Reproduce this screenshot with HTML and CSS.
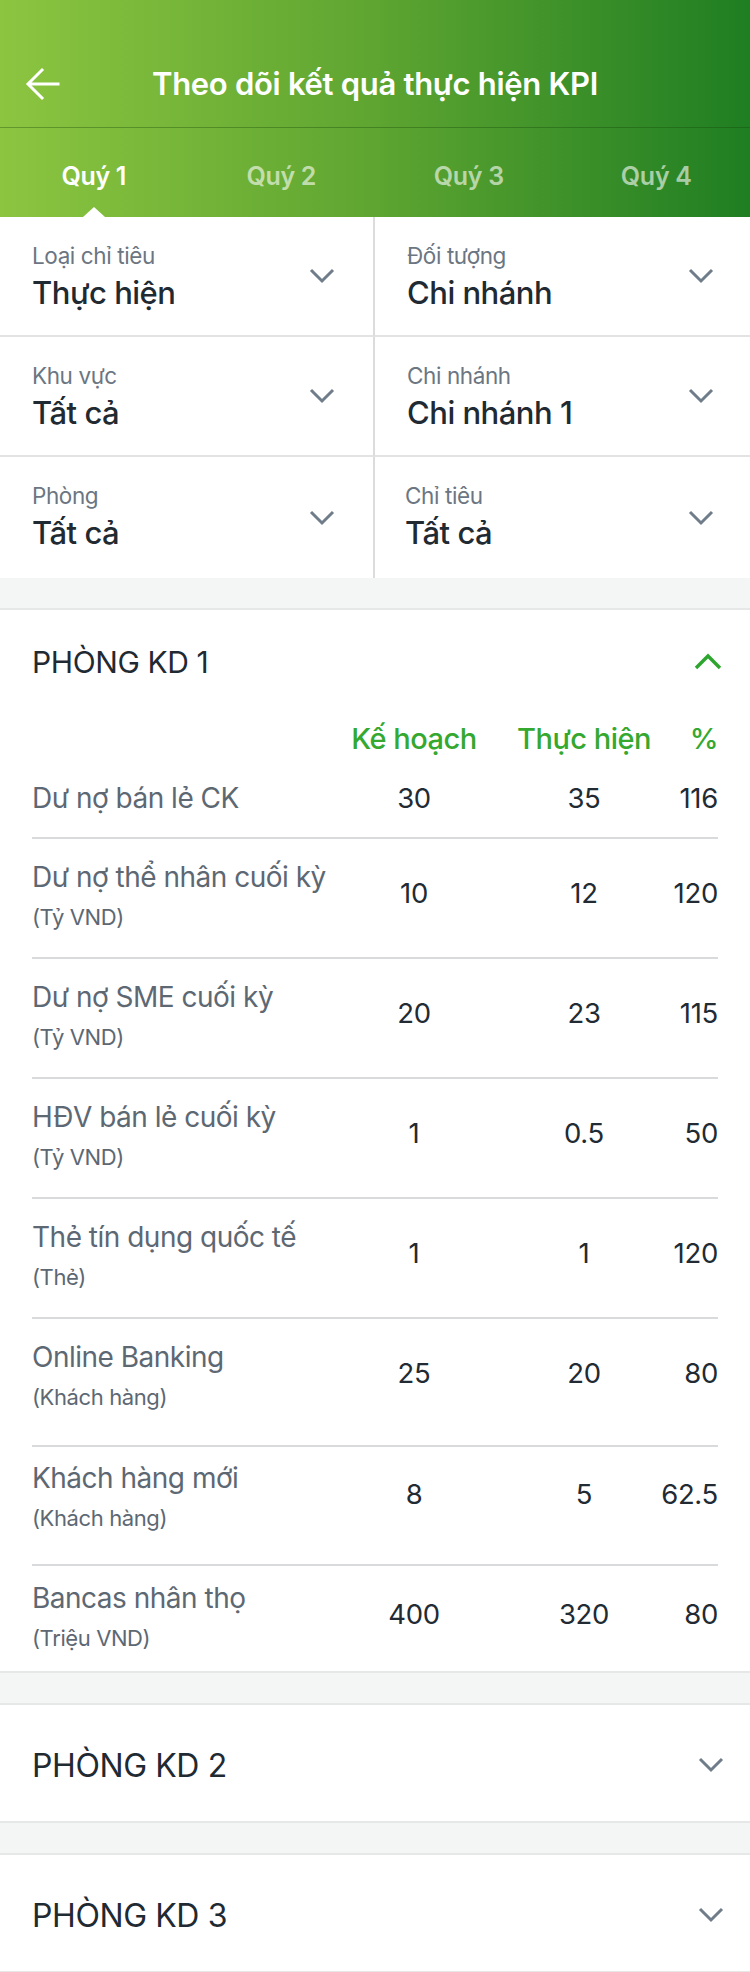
FILE: index.html
```html
<!DOCTYPE html>
<html lang="vi">
<head>
<meta charset="utf-8">
<title>Theo dõi kết quả thực hiện KPI</title>
<link rel="stylesheet" href="styles.css">
</head>
<body>
<div class="app">
  <header class="header">
    <div class="topbar">
      <div class="back">
        <svg width="36" height="36" viewBox="0 0 36 36" fill="none" stroke="#fff" stroke-width="3" stroke-linecap="square"><path d="M4 18H33M17 4L3 18L17 32"/></svg>
      </div>
      <h1 class="title">Theo dõi kết quả thực hiện KPI</h1>
      <div class="spacer"></div>
    </div>
    <nav class="tabs">
      <div class="tab tab--active">Quý 1</div>
      <div class="tab">Quý 2</div>
      <div class="tab">Quý 3</div>
      <div class="tab">Quý 4</div>
    </nav>
  </header>

  <section class="filters">
    <div class="filter filter--left">
      <div class="filter__text"><div class="filter__label">Loại chỉ tiêu</div><div class="filter__value">Thực hiện</div></div>
      <svg class="chev" width="26" height="18" viewBox="0 0 26 18"><path d="M2 3L13 14L24 3" fill="none" stroke="#6f7c89" stroke-width="3"/></svg>
    </div>
    <div class="filter">
      <div class="filter__text"><div class="filter__label">Đối tượng</div><div class="filter__value">Chi nhánh</div></div>
      <svg class="chev" width="26" height="18" viewBox="0 0 26 18"><path d="M2 3L13 14L24 3" fill="none" stroke="#6f7c89" stroke-width="3"/></svg>
    </div>
    <div class="filter filter--left">
      <div class="filter__text"><div class="filter__label">Khu vực</div><div class="filter__value">Tất cả</div></div>
      <svg class="chev" width="26" height="18" viewBox="0 0 26 18"><path d="M2 3L13 14L24 3" fill="none" stroke="#6f7c89" stroke-width="3"/></svg>
    </div>
    <div class="filter">
      <div class="filter__text"><div class="filter__label">Chi nhánh</div><div class="filter__value">Chi nhánh 1</div></div>
      <svg class="chev" width="26" height="18" viewBox="0 0 26 18"><path d="M2 3L13 14L24 3" fill="none" stroke="#6f7c89" stroke-width="3"/></svg>
    </div>
    <div class="filter filter--left filter--last">
      <div class="filter__text"><div class="filter__label">Phòng</div><div class="filter__value">Tất cả</div></div>
      <svg class="chev" width="26" height="18" viewBox="0 0 26 18"><path d="M2 3L13 14L24 3" fill="none" stroke="#6f7c89" stroke-width="3"/></svg>
    </div>
    <div class="filter filter--last">
      <div class="filter__text filter__text--tight"><div class="filter__label">Chỉ tiêu</div><div class="filter__value">Tất cả</div></div>
      <svg class="chev" width="26" height="18" viewBox="0 0 26 18"><path d="M2 3L13 14L24 3" fill="none" stroke="#6f7c89" stroke-width="3"/></svg>
    </div>
  </section>

  <div class="gap"></div>

  <section class="card">
    <div class="card__head">
      <span class="card__title">PHÒNG KD 1</span>
      <svg class="chev chev--up" width="28" height="18" viewBox="0 0 28 18"><path d="M2 15L14 3L26 15" fill="none" stroke="#2ea52e" stroke-width="3.4"/></svg>
    </div>
    <div class="table">
      <div class="thead">
        <span></span>
        <span class="th th--center">Kế hoạch</span>
        <span class="th th--center">Thực hiện</span>
        <span class="th th--right">%</span>
      </div>
      <div class="row row--single">
        <div class="row__name">Dư nợ bán lẻ CK</div>
        <div class="num num--center">30</div>
        <div class="num num--center">35</div>
        <div class="num num--right">116</div>
      </div>
      <div class="row">
        <div class="row__name">Dư nợ thể nhân cuối kỳ<span class="row__unit">(Tỷ VND)</span></div>
        <div class="num num--center">10</div>
        <div class="num num--center">12</div>
        <div class="num num--right">120</div>
      </div>
      <div class="row">
        <div class="row__name">Dư nợ SME cuối kỳ<span class="row__unit">(Tỷ VND)</span></div>
        <div class="num num--center">20</div>
        <div class="num num--center">23</div>
        <div class="num num--right">115</div>
      </div>
      <div class="row">
        <div class="row__name">HĐV bán lẻ cuối kỳ<span class="row__unit">(Tỷ VND)</span></div>
        <div class="num num--center">1</div>
        <div class="num num--center">0.5</div>
        <div class="num num--right">50</div>
      </div>
      <div class="row">
        <div class="row__name">Thẻ tín dụng quốc tế<span class="row__unit">(Thẻ)</span></div>
        <div class="num num--center">1</div>
        <div class="num num--center">1</div>
        <div class="num num--right">120</div>
      </div>
      <div class="row row--tall">
        <div class="row__name">Online Banking<span class="row__unit">(Khách hàng)</span></div>
        <div class="num num--center">25</div>
        <div class="num num--center">20</div>
        <div class="num num--right">80</div>
      </div>
      <div class="row row--up">
        <div class="row__name">Khách hàng mới<span class="row__unit">(Khách hàng)</span></div>
        <div class="num num--center">8</div>
        <div class="num num--center">5</div>
        <div class="num num--right">62.5</div>
      </div>
      <div class="row row--up row--last">
        <div class="row__name">Bancas nhân thọ<span class="row__unit">(Triệu VND)</span></div>
        <div class="num num--center">400</div>
        <div class="num num--center">320</div>
        <div class="num num--right">80</div>
      </div>
    </div>
  </section>

  <div class="gap"></div>

  <section class="card card--collapsed">
    <span class="card__title card__title--big">PHÒNG KD 2</span>
    <svg class="chev" width="26" height="18" viewBox="0 0 26 18"><path d="M2 3L13 14L24 3" fill="none" stroke="#6f7c89" stroke-width="3"/></svg>
  </section>

  <div class="gap"></div>

  <section class="card card--collapsed">
    <span class="card__title card__title--big">PHÒNG KD 3</span>
    <svg class="chev" width="26" height="18" viewBox="0 0 26 18"><path d="M2 3L13 14L24 3" fill="none" stroke="#6f7c89" stroke-width="3"/></svg>
  </section>
</div>
</body>
</html>
```

FILE: styles.css
```css
* { box-sizing: border-box; }
html, body { margin: 0; padding: 0; }
body {
  font-family: Inter, "Noto Sans", "Liberation Sans", sans-serif;
  background: #f4f6f5;
  width: 750px;
  color: #1f2a33;
}
.app { width: 750px; }

.header {
  background: linear-gradient(90deg, #8cc540 0%, #5ea531 50%, #1f7e22 100%);
  color: #fff;
}
.topbar {
  height: 128px;
  display: flex;
  align-items: center;
  padding-top: 40px;
  border-bottom: 1px solid rgba(20, 70, 10, 0.35);
}
.back {
  width: 90px;
  padding-left: 25px;
  display: flex;
  align-items: center;
}
.spacer { width: 90px; }
.title {
  flex: 1;
  margin: 0;
  text-align: center;
  font-size: 31px;
  font-weight: 600;
  letter-spacing: -0.3px;
}
.tabs {
  height: 89px;
  display: grid;
  grid-template-columns: repeat(4, 1fr);
}
.tab {
  position: relative;
  display: flex;
  align-items: center;
  justify-content: center;
  font-size: 25px;
  font-weight: 600;
  letter-spacing: -0.3px;
  color: rgba(255, 255, 255, 0.6);
  padding-top: 6px;
}
.tab--active { color: #fff; }
.tab--active::after {
  content: "";
  position: absolute;
  bottom: 0;
  left: 50%;
  margin-left: -11px;
  border-left: 11px solid transparent;
  border-right: 11px solid transparent;
  border-bottom: 10px solid #fff;
}

.filters {
  background: #fff;
  display: grid;
  grid-template-columns: 1fr 1fr;
}
.filter {
  height: 120px;
  display: flex;
  align-items: center;
  justify-content: space-between;
  padding: 0 36px 0 32px;
  border-bottom: 2px solid #e3e3e3;
}
.filter--left {
  border-right: 2px solid #dcdcdc;
  padding-right: 38px;
}
.filter--last { border-bottom: none; height: 121px; }
.filter__text {
  align-self: flex-start;
  padding-top: 24px;
}
.filter__text--tight { margin-left: -2px; }
.filter__label {
  font-size: 22.5px;
  line-height: 30px;
  color: #6b7682;
  letter-spacing: -0.4px;
}
.filter__value {
  font-size: 31px;
  line-height: 44px;
  font-weight: 500;
  color: #1f2a33;
  letter-spacing: -0.5px;
}
.chev { display: block; flex: none; }

.gap {
  height: 30px;
  background: #f4f6f5;
}

.card {
  background: #fff;
  border-top: 2px solid #e6e7e7;
  border-bottom: 2px solid #e6e7e7;
}
.card__head {
  height: 104px;
  display: flex;
  align-items: center;
  justify-content: space-between;
  padding: 0 28px 0 32px;
}
.card__title {
  font-size: 30px;
  color: #1f2a33;
  letter-spacing: -0.4px;
}
.card__title--big { font-size: 32px; }

.table { margin: 0 32px; }
.thead, .row {
  display: grid;
  grid-template-columns: minmax(0, 1fr) 208px 132px 68px;
}
.thead {
  height: 48px;
  align-items: center;
}
.th {
  display: flex;
  white-space: nowrap;
  font-size: 29px;
  font-weight: 500;
  color: #34a82f;
  letter-spacing: -0.5px;
}
.th--center { justify-content: center; }
.th--right { justify-content: flex-end; }

.row {
  align-items: start;
  padding: 19px 0 19px;
  border-bottom: 2px solid #d9dadb;
}
.row--single { padding: 16px 0 19px; }
.row--tall { padding-bottom: 27px; }
.row--up { padding: 12px 0 25px; }
.row--last { border-bottom: none; padding: 13px 0 12px; }
.row__name {
  white-space: nowrap;
  font-size: 28px;
  line-height: 38px;
  color: #5d6873;
  letter-spacing: -0.5px;
}
.row__unit {
  display: block;
  font-size: 22px;
  line-height: 42px;
  letter-spacing: -0.4px;
}
.num {
  display: flex;
  white-space: nowrap;
  margin-top: 16px;
  font-size: 27.5px;
  line-height: 38px;
  color: #222b33;
  letter-spacing: -0.3px;
}
.row--single .num { margin-top: 0; }
.row--single .num, .row--single .row__name { line-height: 40px; }
.num--center { justify-content: center; }
.num--right { justify-content: flex-end; }

.card--collapsed {
  height: 120px;
  display: flex;
  align-items: center;
  justify-content: space-between;
  padding: 4px 26px 0 32px;
}
```
